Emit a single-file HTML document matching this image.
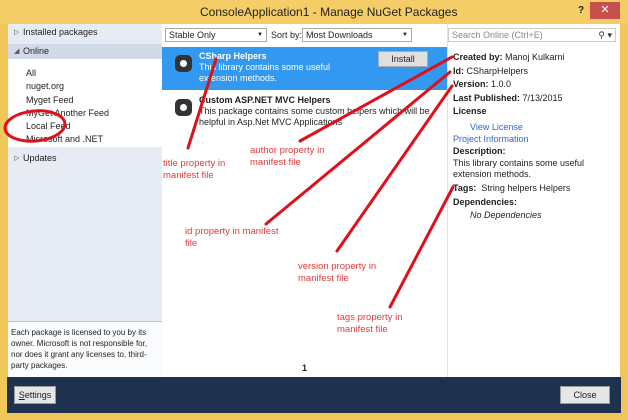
<!DOCTYPE html>
<html><head><style>
*{margin:0;padding:0;box-sizing:border-box}
body{width:628px;height:420px;overflow:hidden;background:#fff;font-family:"Liberation Sans",sans-serif;font-size:9px;color:#1e1e1e;position:relative}
.a{position:absolute}
.r{color:#e03a3a;font-size:9.5px;line-height:12px}
b{font-weight:bold}
</style></head><body>
<div class="a" style="left:0;top:0;width:628px;height:420px;background:#f1c75a"></div>
<div class="a" style="left:0;top:0;width:628px;height:24px;background:#f4cd66"></div>
<div class="a" style="left:200px;top:5px;font-size:12px;color:#222">ConsoleApplication1 - Manage NuGet Packages</div>
<div class="a" style="left:578px;top:5px;font-size:10px;font-weight:bold">?</div>
<div class="a" style="left:590px;top:2px;width:30px;height:17px;background:#c7504c;color:#fff;text-align:center;font-size:11px;line-height:17px">✕</div>
<!-- left panel -->
<div class="a" style="left:8px;top:24px;width:154px;height:353px;background:#e6ebf4"></div>
<div class="a" style="left:8px;top:44px;width:154px;height:15px;background:#d3dae7"></div>
<div class="a" style="left:8px;top:59px;width:154px;height:88px;background:#fff"></div>
<div class="a" style="left:14px;top:28px;font-size:7px;color:#555">▷</div>
<div class="a" style="left:23px;top:27px">Installed packages</div>
<div class="a" style="left:14px;top:47px;font-size:7px;color:#555">◢</div>
<div class="a" style="left:23px;top:46px">Online</div>
<div class="a" style="left:26px;top:67px;line-height:13.3px">All<br>nuget.org<br>Myget Feed<br>MyGet Another Feed<br>Local Feed<br>Microsoft and .NET</div>
<div class="a" style="left:14px;top:154px;font-size:7px;color:#555">▷</div>
<div class="a" style="left:23px;top:153px">Updates</div>
<div class="a" style="left:8px;top:321px;width:154px;height:1px;background:#b8c2d2"></div>
<div class="a" style="left:8px;top:322px;width:154px;height:55px;background:#fafbfd"></div>
<div class="a" style="left:11px;top:327px;width:148px;font-size:8px;line-height:11px">Each package is licensed to you by its owner. Microsoft is not responsible for, nor does it grant any licenses to, third-party packages.</div>
<!-- middle -->
<div class="a" style="left:162px;top:24px;width:285px;height:353px;background:#fff"></div>
<div class="a" style="left:165px;top:28px;width:102px;height:14px;border:1px solid #aaa;padding:1px 3px">Stable Only<span style="float:right;font-size:6px;margin-top:2px">▼</span></div>
<div class="a" style="left:271px;top:30px">Sort by:</div>
<div class="a" style="left:302px;top:28px;width:110px;height:14px;border:1px solid #aaa;padding:1px 3px">Most Downloads<span style="float:right;font-size:6px;margin-top:2px">▼</span></div>
<div class="a" style="left:162px;top:47px;width:285px;height:43px;background:#3399f0"></div>
<div class="a" style="left:175px;top:55px;width:17px;height:17px;border-radius:5px;background:#333"></div>
<div class="a" style="left:180px;top:60px;width:7px;height:7px;border-radius:50%;background:#fff"></div>
<div class="a" style="left:199px;top:51px;color:#fff;font-weight:bold">CSharp Helpers</div>
<div class="a" style="left:199px;top:62px;color:#fff;line-height:11px;width:170px">This library contains some useful extension methods.</div>
<div class="a" style="left:378px;top:51px;width:50px;height:16px;background:#e0e0e0;border:1px solid #aaa;text-align:center;line-height:14px">Install</div>
<div class="a" style="left:175px;top:99px;width:17px;height:17px;border-radius:5px;background:#333"></div>
<div class="a" style="left:180px;top:104px;width:7px;height:7px;border-radius:50%;background:#fff"></div>
<div class="a" style="left:199px;top:95px;font-weight:bold">Custom ASP.NET MVC Helpers</div>
<div class="a" style="left:199px;top:106px;line-height:11px;width:240px">This package contains some custom helpers which will be helpful in Asp.Net MVC Applications</div>
<div class="a" style="left:302px;top:363px;font-weight:bold">1</div>
<!-- right -->
<div class="a" style="left:447px;top:24px;width:1px;height:353px;background:#e0e0e0"></div>
<div class="a" style="left:448px;top:24px;width:172px;height:353px;background:#fff"></div>
<div class="a" style="left:448px;top:28px;width:168px;height:14px;border:1px solid #ccc;padding:1px 3px;color:#888">Search Online (Ctrl+E)<span style="float:right;color:#333">⚲ ▾</span></div>
<div class="a" style="left:453px;top:51px;line-height:13.5px;width:165px">
<b>Created by:</b> Manoj Kulkarni<br><b>Id:</b> CSharpHelpers<br><b>Version:</b> 1.0.0<br><b>Last Published:</b> 7/13/2015<br><b>License</b></div>
<div class="a" style="left:453px;top:121px;line-height:12px;width:165px"><span style="color:#3366cc;margin-left:17px">View License</span><br><span style="color:#3366cc">Project Information</span><br><b>Description:</b></div>
<div class="a" style="left:453px;top:158px;line-height:11px;width:165px">This library contains some useful extension methods.</div>
<div class="a" style="left:453px;top:182px;line-height:13.5px"><b>Tags:</b> &nbsp;String helpers Helpers<br><b>Dependencies:</b><br><i style="margin-left:17px">No Dependencies</i></div>
<!-- bottom -->
<div class="a" style="left:7px;top:377px;width:614px;height:36px;background:#1e3250"></div>
<div class="a" style="left:14px;top:386px;width:42px;height:18px;background:#e6e6e6;border:1px solid #999;text-align:center;line-height:16px"><u>S</u>ettings</div>
<div class="a" style="left:560px;top:386px;width:50px;height:18px;background:#e6e6e6;border:1px solid #999;text-align:center;line-height:16px">Close</div>
<!-- annotations -->
<svg class="a" style="left:0;top:0" width="628" height="420">
<g stroke="#e0101a" stroke-width="3" stroke-linecap="round" fill="none">
<line x1="216" y1="59" x2="188" y2="148"/>
<line x1="452" y1="57" x2="300" y2="141"/>
<line x1="450" y1="72" x2="266" y2="224"/>
<line x1="452" y1="86" x2="337" y2="251"/>
<line x1="453" y1="187" x2="390" y2="307"/>
<ellipse cx="35" cy="126" rx="30" ry="15" transform="rotate(-5 35 126)"/>
</g></svg>
<div class="a r" style="left:163px;top:158px">title property in<br>manifest file</div>
<div class="a r" style="left:250px;top:145px">author property in<br>manifest file</div>
<div class="a r" style="left:185px;top:226px">id property in manifest<br>file</div>
<div class="a r" style="left:298px;top:261px">version property in<br>manifest file</div>
<div class="a r" style="left:337px;top:312px">tags property in<br>manifest file</div>
</body></html>
